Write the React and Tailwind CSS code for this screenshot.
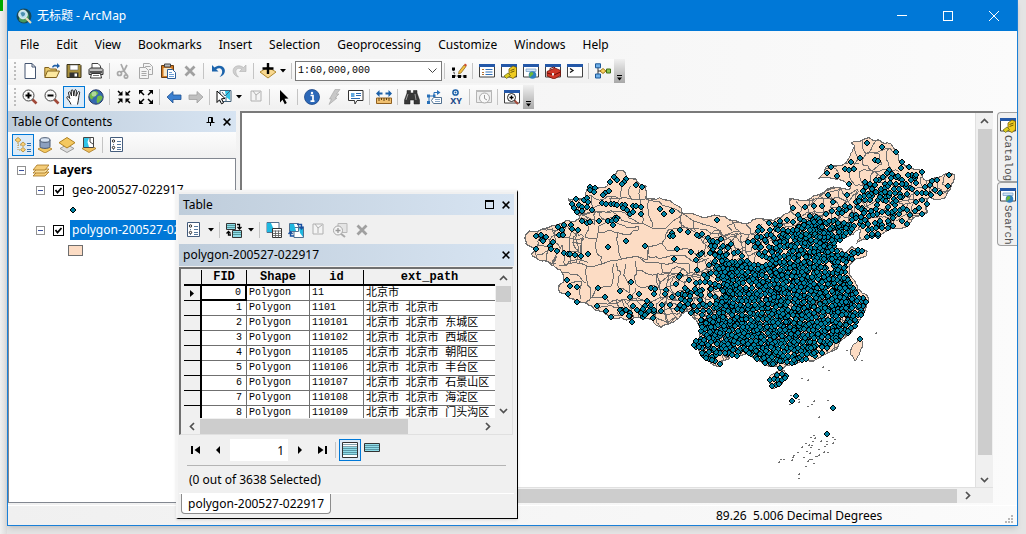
import React from "react";

/* ---------- map data ---------- */
function makeRandom(seed) {
  let s = seed;
  return () => {
    s = (s * 1664525 + 1013904223) % 4294967296;
    return s / 4294967296;
  };
}

const OUTLINE = [
  [526, 237], [530, 230], [540, 230], [549, 227], [558, 224], [573, 221], [581, 217], [577, 212], [572, 204], [570, 198],
  [580, 197], [588, 197], [589, 185], [598, 187], [608, 185], [612, 177], [618, 170], [626, 171], [628, 177], [637, 178],
  [647, 185], [647, 197], [653, 198], [667, 199], [682, 207], [684, 213], [697, 214], [720, 215], [738, 220], [752, 221],
  [760, 217], [783, 216], [792, 210], [791, 198], [798, 198], [807, 200], [813, 196], [823, 193], [827, 189], [840, 186],
  [851, 188], [852, 184], [845, 180], [837, 178], [820, 177], [827, 166], [837, 165], [846, 162], [852, 152], [856, 145],
  [852, 142], [863, 139], [880, 139], [892, 143], [898, 152], [903, 162], [910, 166], [922, 170], [927, 180], [938, 177],
  [947, 173], [956, 174], [952, 185], [947, 195], [942, 198], [930, 196], [928, 203], [928, 212], [920, 215], [910, 222],
  [893, 227], [880, 235], [867, 238], [858, 242], [862, 228], [857, 230], [850, 235], [843, 238], [835, 244], [843, 248],
  [846, 252], [853, 245], [868, 250], [867, 255], [857, 258], [850, 265], [850, 273], [857, 283], [863, 292], [870, 298],
  [867, 307], [863, 315], [858, 323], [850, 333], [840, 343], [827, 353], [810, 360], [795, 363], [787, 365], [783, 370],
  [778, 365], [765, 363], [757, 359], [748, 352], [740, 355], [732, 355], [723, 360], [722, 365], [713, 363], [707, 358],
  [702, 352], [693, 345], [700, 338], [702, 327], [698, 320], [692, 313], [687, 310], [680, 317], [670, 323], [663, 326],
  [655, 322], [653, 318], [643, 317], [628, 319], [612, 317], [600, 310], [587, 302], [577, 300], [567, 293], [560, 290],
  [560, 284], [565, 281], [562, 270], [555, 265], [543, 260], [532, 253], [537, 247], [527, 243],
];

const TAIWAN = [[862, 338], [864, 343], [861, 351], [858, 357], [856, 360], [851, 353], [853, 346]];
const HAINAN = [[769, 379], [776, 372], [785, 369], [788, 376], [782, 384], [775, 388]];

const DENSE = [
  [714, 266], [726, 260], [742, 257], [757, 264], [770, 260], [774, 246], [784, 230], [800, 222], [822, 219], [840, 220],
  [857, 222], [850, 235], [836, 243], [837, 249], [845, 254], [853, 247], [867, 251], [856, 257], [849, 265], [849, 275],
  [862, 293], [868, 299], [865, 310], [858, 323], [848, 334], [827, 351], [808, 359], [785, 364], [778, 364], [765, 362],
  [757, 358], [748, 351], [735, 353], [724, 354], [714, 362], [703, 354], [694, 345], [702, 336], [702, 318], [716, 312],
  [724, 290],
];
const NORTHEAST = [
  [866, 180], [888, 167], [900, 174], [914, 170], [922, 184], [938, 178], [930, 196], [912, 190], [900, 200], [902, 212],
  [916, 214], [893, 226], [880, 235], [862, 241], [866, 226], [846, 224], [856, 214], [856, 202], [864, 192],
];
const GANSU = [[706, 234], [718, 240], [732, 248], [742, 252], [752, 258], [742, 262], [722, 264], [712, 254]];
const SICHUAN = [[704, 266], [720, 260], [728, 290], [718, 312], [702, 316], [676, 310], [676, 294], [692, 286]];
const CORRIDOR = [[754, 246], [762, 228], [784, 220], [796, 216], [850, 208], [858, 216], [836, 222], [800, 226], [776, 242], [770, 262]];
const TIBET = [[618, 308], [640, 303], [652, 302], [662, 312], [654, 317], [622, 316]];

function inside([x, y], ring) {
  let hit = false;
  for (let i = 0, j = ring.length - 1; i < ring.length; j = i++) {
    const [xi, yi] = ring[i];
    const [xj, yj] = ring[j];
    if (yi > y !== yj > y && x < ((xj - xi) * (y - yi)) / (yj - yi) + xi) hit = !hit;
  }
  return hit;
}

function scatter(ring, step, jitter, keep, seed) {
  const rnd = makeRandom(seed);
  const out = [];
  let row = 0;
  for (let y = 160; y < 392; y += step * 0.9, row++) {
    for (let x = 600 + (row % 2) * (step / 2); x < 960; x += step) {
      const p = [Math.round(x + (rnd() - 0.5) * jitter), Math.round(y + (rnd() - 0.5) * jitter)];
      if (rnd() < keep && inside(p, ring)) out.push([p, rnd()]);
    }
  }
  return out.sort((a, b) => a[1] - b[1]).map((e) => e[0]);
}

const place = (ox, oy, list) => {
  const out = [];
  for (let i = 0; i < list.length; i += 2) out.push([Math.round(ox + list[i] / 3), Math.round(oy + list[i + 1] / 3)]);
  return out;
};

const WEST_STATIONS = place(520, 130, [
  285, 138, 293, 147, 273, 153, 321, 144, 315, 153, 308, 160, 351, 161, 369, 168, 212, 168, 228, 171, 213, 177, 225, 182,
  270, 181, 258, 187, 252, 192, 171, 203, 158, 218, 196, 206, 205, 202, 208, 212, 165, 230, 180, 222, 190, 228, 204, 228,
  174, 243, 189, 240, 219, 237, 250, 216, 262, 218, 276, 219, 284, 218, 294, 221, 309, 222, 318, 222, 312, 232, 324, 237,
  342, 226, 352, 226, 366, 228, 333, 249, 342, 244, 366, 249, 423, 234, 459, 240, 435, 249, 594, 267, 189, 270, 204, 276,
  213, 272, 240, 270, 267, 270, 279, 270, 288, 262, 295, 262, 291, 267, 282, 282, 117, 288, 135, 282, 129, 297, 156, 281,
  159, 294, 177, 297, 120, 312, 132, 312, 51, 315, 66, 312, 81, 318, 69, 327, 72, 330, 51, 354, 102, 333, 93, 345, 96, 354,
  114, 360, 135, 366, 147, 369, 153, 369, 168, 372, 186, 375, 207, 369, 267, 347, 321, 330, 378, 345, 483, 297, 507, 303,
  459, 306, 453, 315, 462, 316, 534, 312, 540, 316, 549, 309, 567, 321, 573, 330, 582, 330, 594, 333, 606, 324, 576, 345,
  588, 345, 612, 345, 627, 351, 636, 339, 474, 354, 516, 363, 465, 384, 531, 387, 540, 372, 549, 366, 573, 367, 588, 372,
  602, 363, 600, 378, 612, 375, 621, 372, 570, 402, 585, 396, 588, 390, 609, 390, 621, 400, 630, 400, 612, 412, 534, 417,
  576, 426, 564, 441, 600, 414, 612, 435, 639, 435, 483, 433, 480, 439, 510, 448, 471, 460, 498, 471, 531, 456, 144, 447,
  153, 465, 174, 468, 147, 489, 174, 513, 237, 471, 258, 498, 234, 525, 261, 540, 276, 559, 336, 453, 303, 480, 333, 498,
  360, 489, 396, 471, 408, 474, 405, 489, 441, 478, 438, 489, 459, 498, 477, 489, 486, 504, 498, 492, 513, 495, 534, 486,
  543, 480, 546, 493, 384, 510, 396, 522, 342, 525, 354, 537, 321, 537, 303, 536, 309, 546, 372, 534, 366, 546, 390, 540,
  405, 537, 378, 552, 402, 561, 330, 555, 339, 573, 429, 522, 426, 540, 453, 523, 474, 534, 483, 521, 507, 519, 525, 525,
  540, 525, 552, 519, 516, 546, 570, 540, 549, 552, 546, 567, 573, 456, 588, 459, 576, 474, 573, 492, 588, 498, 600, 465,
  612, 480, 624, 462, 621, 498, 573, 519, 591, 519, 600, 546, 612, 558, 621, 525,
]);
const EAST_STATIONS = place(680, 120, [
  564, 66, 609, 78, 651, 93, 543, 111, 516, 123, 588, 117, 597, 120, 669, 122, 666, 141, 690, 137, 729, 153, 711, 163,
  456, 138, 444, 156, 474, 165, 498, 144, 510, 147, 525, 144, 510, 189, 447, 222, 504, 222, 462, 243, 429, 255, 405, 255,
  378, 258, 342, 261, 357, 282, 459, 270, 480, 264, 498, 255, 513, 258, 489, 276, 531, 243, 543, 228, 552, 210, 540, 240,
  810, 162, 807, 195, 774, 177, 783, 215, 768, 207, 756, 222, 744, 250, 711, 243, 729, 237, 684, 267, 708, 270, 693, 282,
  729, 279, 684, 309, 672, 260, 720, 260, 27, 333, 54, 342, 69, 339, 303, 300, 270, 306, 240, 318, 237, 330, 234, 348, 208,
  363, 222, 360, 246, 378, 240, 399, 276, 342, 258, 357, 297, 326, 270, 378, 36, 393, 51, 417, 90, 432, 54, 447, 66, 398,
]);
const SOUTH_STATIONS = place(680, 310, [
  543, 84, 351, 255, 339, 270, 462, 291, 444, 369, 123, 159, 99, 147, 81, 141, 45, 102, 51, 90, 303, 171, 159, 132, 174, 135,
  234, 144, 258, 156, 282, 160, 36, 6, 294, 192, 309, 189, 321, 195, 273, 207, 285, 204, 297, 208, 309, 207, 291, 222, 279, 225,
  300, 219, 318, 201,
]);

const STATIONS = [
  ...scatter(TIBET, 6, 4, 0.8, 41),
  ...scatter(SICHUAN, 7, 6, 0.72, 23),
  ...scatter(CORRIDOR, 6, 4, 0.75, 31),
  ...scatter(GANSU, 6, 4, 0.8, 17),
  ...scatter(NORTHEAST, 5, 4, 0.88, 5),
  ...scatter(DENSE, 4, 3, 0.97, 11),
  ...WEST_STATIONS,
  ...EAST_STATIONS,
  ...SOUTH_STATIONS,
];

function jag(points, seed, closed) {
  const rnd = makeRandom(seed);
  let pts = closed ? [...points, points[0]] : points;
  for (let n = 0; n < 2; n++) {
    const next = [pts[0]];
    for (let i = 1; i < pts.length; i++) {
      const [ax, ay] = pts[i - 1];
      const [bx, by] = pts[i];
      const len = Math.hypot(bx - ax, by - ay);
      if (len > 3) next.push([(ax + bx) / 2 + (rnd() - 0.5) * len * 0.32, (ay + by) / 2 + (rnd() - 0.5) * len * 0.32]);
      next.push(pts[i]);
    }
    pts = next;
  }
  return "M" + pts.map((p) => p[0].toFixed(1) + " " + p[1].toFixed(1)).join("L") + (closed ? "Z" : "");
}

const line = (ox, oy, list, seed) => jag(place(ox, oy, list), seed, false);

const BORDERS = [
  line(520, 130, [270, 205, 380, 205, 420, 210, 490, 250], 1),
  line(520, 130, [185, 250, 240, 240, 300, 240, 330, 262, 400, 290, 440, 290, 485, 255], 2),
  line(520, 130, [305, 165, 310, 205], 3),
  line(520, 130, [335, 165, 328, 185, 340, 205], 4),
  line(520, 130, [365, 165, 360, 205], 5),
  line(520, 130, [390, 208, 388, 245, 400, 290], 6),
  line(520, 130, [365, 205, 372, 235, 370, 275], 7),
  line(520, 130, [240, 285, 300, 278, 358, 285, 358, 298, 300, 305, 238, 305, 240, 285], 8),
  line(520, 130, [230, 320, 235, 365, 250, 400, 310, 385, 300, 350, 297, 305], 9),
  line(520, 130, [310, 385, 385, 388, 390, 350, 378, 342, 430, 335, 450, 295, 490, 290], 10),
  line(520, 130, [490, 250, 485, 290, 540, 310, 600, 320, 660, 300], 11),
  line(520, 130, [495, 250, 525, 270, 530, 300], 12),
  line(520, 130, [525, 270, 590, 290, 610, 325], 13),
  line(520, 130, [660, 272, 625, 285, 640, 300], 14),
  line(520, 130, [120, 405, 160, 395, 205, 405, 250, 400], 15),
  line(520, 130, [205, 405, 203, 450, 215, 500, 200, 515], 16),
  line(520, 130, [285, 400, 285, 440, 275, 465, 235, 470, 215, 500], 17),
  line(520, 130, [290, 395, 305, 430, 300, 470, 330, 485, 320, 400], 18),
  line(520, 130, [350, 390, 355, 420, 345, 440, 370, 470, 420, 470, 415, 430, 355, 418], 19),
  line(520, 130, [310, 385, 420, 395, 510, 400, 510, 425, 430, 425, 425, 400], 20),
  line(520, 130, [420, 455, 490, 430, 540, 440, 560, 410, 580, 400], 21),
  line(520, 130, [390, 350, 385, 375, 430, 380, 520, 390, 570, 380], 22),
  line(520, 130, [430, 335, 450, 360, 500, 350, 550, 375], 23),
  line(520, 130, [160, 300, 150, 345, 155, 395], 24),
  line(520, 130, [195, 320, 190, 370, 180, 395], 25),
  line(520, 130, [172, 300, 178, 345, 170, 395], 26),
  line(520, 130, [210, 285, 200, 320, 235, 320, 238, 305], 27),
  line(520, 130, [100, 290, 120, 320, 190, 320], 28),
  line(520, 130, [90, 345, 80, 390, 110, 400], 29),
  line(520, 130, [120, 355, 100, 400], 30),
  line(520, 130, [160, 250, 215, 265, 300, 255, 370, 275], 31),
  line(520, 130, [125, 425, 170, 430, 200, 455], 32),
  line(520, 130, [155, 455, 190, 450, 180, 480, 185, 505], 33),
  line(520, 130, [215, 500, 260, 500, 290, 520, 360, 510, 420, 500, 470, 510, 540, 500], 34),
  line(520, 130, [350, 470, 340, 510], 35),
  line(520, 130, [400, 555, 430, 540, 480, 540, 520, 530], 36),
  line(520, 130, [450, 580, 445, 550], 37),
  line(520, 130, [440, 470, 445, 500, 430, 530], 38),
  line(520, 130, [495, 460, 510, 490, 500, 530, 505, 550], 39),
  line(520, 130, [530, 450, 550, 490, 545, 520], 40),
  line(680, 120, [0, 300, 45, 320, 100, 340, 160, 360, 185, 335, 160, 300], 41),
  line(680, 120, [165, 360, 170, 395, 215, 390, 250, 310], 42),
  line(680, 120, [200, 300, 215, 340, 230, 345], 43),
  line(680, 120, [250, 295, 290, 320, 340, 300, 370, 260, 440, 210, 510, 205], 44),
  line(680, 120, [335, 270, 370, 300, 420, 290, 460, 260, 510, 240, 540, 210], 45),
  line(680, 120, [350, 240, 370, 260], 46),
  line(680, 120, [405, 230, 410, 290], 47),
  line(680, 120, [435, 215, 470, 240, 480, 290], 48),
  line(680, 120, [525, 75, 540, 110, 510, 160, 530, 195, 560, 190], 49),
  line(680, 120, [550, 58, 560, 100, 550, 130, 580, 150, 630, 145, 660, 150], 50),
  line(680, 120, [590, 60, 570, 95, 630, 80, 650, 95], 51),
  line(680, 120, [630, 80, 620, 115, 635, 145], 52),
  line(680, 120, [560, 100, 600, 100, 610, 130, 580, 150], 53),
  line(680, 120, [440, 140, 470, 145, 480, 175], 54),
  line(680, 120, [497, 125, 540, 130, 550, 130], 55),
  line(680, 120, [740, 180, 760, 210, 790, 220, 815, 195], 56),
  line(680, 120, [800, 160, 790, 190, 815, 195], 57),
  line(680, 120, [660, 240, 700, 235, 740, 240], 58),
  line(680, 120, [650, 300, 690, 270, 745, 275], 59),
];

/* County lines: an irregular mesh drawn only where counties are small. */
function mesh(x0, y0, x1, y1, step, seed) {
  const rnd = makeRandom(seed);
  const grid = [];
  for (let y = y0; y <= y1; y += step) {
    const row = [];
    for (let x = x0; x <= x1; x += step) row.push([x + (rnd() - 0.5) * step, y + (rnd() - 0.5) * step]);
    grid.push(row);
  }
  const out = [];
  for (let r = 0; r < grid.length; r++)
    for (let c = 0; c < grid[r].length; c++) {
      if (c + 1 < grid[r].length && rnd() < 0.8) out.push(jag([grid[r][c], grid[r][c + 1]], seed + r * 31 + c, false));
      if (r + 1 < grid.length && rnd() < 0.8) out.push(jag([grid[r][c], grid[r + 1][c]], seed + r * 17 + c * 3, false));
    }
  return out.join("");
}

const COUNTIES = [
  mesh(540, 226, 590, 262, 9, 3),
  mesh(572, 196, 625, 222, 8, 4),
  mesh(600, 300, 660, 320, 8, 5),
  mesh(660, 270, 730, 330, 7, 6),
  mesh(700, 232, 780, 275, 7, 7),
  mesh(775, 215, 860, 245, 8, 8),
  mesh(800, 190, 860, 220, 10, 12),
  mesh(862, 175, 945, 240, 9, 9),
  mesh(695, 300, 870, 370, 7, 10),
].join("");

const ISLETS = place(680, 310, [
  588, 66, 502, 118, 546, 148, 429, 169, 447, 177, 366, 201, 384, 207, 333, 252, 357, 264, 356, 273, 330, 279, 444, 267,
  402, 270, 396, 279, 383, 285, 416, 318, 393, 378, 402, 372, 404, 380, 459, 378, 465, 384, 459, 396, 440, 390, 434, 405,
  422, 390, 417, 414, 396, 402, 387, 402, 393, 408, 380, 420, 366, 408, 354, 424, 342, 432, 336, 447, 312, 444, 303, 444,
  297, 453, 372, 438, 390, 444, 384, 450, 396, 444, 408, 436, 416, 432, 402, 456, 378, 465, 356, 490, 358, 502, 440, 400,
  432, 423, 398, 390, 378, 396, 338, 438, 412, 434, 444, 422, 390, 426,
]);

function MapDrawing() {
  return (
    <svg className="block h-[373px] w-[733px] shrink-0" viewBox="243 112 733 373" role="img" aria-label="Map of China">
      <defs>
        <clipPath id="land"><path d={jag(OUTLINE, 77, true)} /></clipPath>
      </defs>
      <path d={jag(OUTLINE, 77, true)} fill="#fcdcc4" stroke="#6e6e6e" strokeWidth="1.2" shapeRendering="crispEdges" />
      <g clipPath="url(#land)" fill="none" stroke="#6e6e6e" strokeWidth="1" shapeRendering="crispEdges">
        <path d={COUNTIES} />
        <path d={BORDERS.join("")} />
      </g>
      <path d={jag(TAIWAN, 8, true) + jag(HAINAN, 9, true)} fill="#fcdcc4" stroke="#6e6e6e" shapeRendering="crispEdges" />
      {ISLETS.map(([x, y], i) => (
        <path key={i} d={i % 3 ? `M${x} ${y}h2v1h-2z` : `M${x} ${y}h1v-1h1v2h-2z`} fill="#6e6e6e" />
      ))}
      {STATIONS.map(([x, y], i) => (
        <g key={i} shapeRendering="crispEdges">
          <path d={`M${x - 1} ${y - 3}h2v1h1v1h1v2h-1v1h-1v1h-2v-1h-1v-1h-1v-2h1v-1h1z`} fill="#000" />
          <path d={`M${x - 1} ${y - 2}h2v1h1v2h-1v1h-2v-1h-1v-2h1z`} fill="#0080a0" />
        </g>
      ))}
    </svg>
  );
}

/* ---------- icons, each on a 16 unit square ---------- */
const Pane = ({ children }) => (
  <>
    <path d="M.5 1.500h15v12.500H.5z" fill="#fff" stroke="#404040" />
    <path d="M0 1h16v3H0z" fill="#2458a8" />
    {children}
  </>
);
const Diamond = ({ y = 0, fill = "#f0c060", stroke = "#a87820" }) => (
  <path d={`M8 ${y}l7 4-7 4-7-4z`} fill={fill} stroke={stroke} strokeWidth=".8" />
);

const ICONS = {
  blank: <path d="M3 .5h7l3.500 3.500v11.500h-10.500zM10 .5V4h3.500" fill="#fff" stroke="#445570" />,
  open: <><path d="M.8 13.500V4.500h4l1.500 1.500h6v2" fill="#e8c868" stroke="#80601c" /><path d="M.8 14.500 3.500 8h12l-3 6.500z" fill="#fce8a0" stroke="#80601c" /><path d="M8 4c1-2.500 3-2.500 5-2V0l3 3-3 2.500V3.800c-2-.5-3-.3-4 1z" fill="#2060a8" /></>,
  save: <><path d="M1 1.500h13l1 1v12H1z" fill="#a8903c" stroke="#383018" /><path d="M4 2h8v5H4z" fill="#fff" stroke="#666" strokeWidth=".6" /><path d="M3.500 9.500h9v5h-9z" fill="#333" /><path d="M8.500 10.500h2.500v3H8.500z" fill="#fff" /></>,
  print: <><path d="M4 6V.5h6L12.500 3v3" fill="#fff" stroke="#444" /><path d="M1 6.500 2.500 5h11L15 6.500v5H1z" fill="#bbb" stroke="#333" /><path d="M2 8h12v2H2z" fill="#555" /><path d="M3.500 10.500h9l1 4.500h-11z" fill="#fff" stroke="#333" /><path d="M5 12.500h6" stroke="#777" /></>,
  cut: <g fill="none" stroke="#a8a8a8" strokeWidth="1.700"><path d="M5 1l3 7 3 4M11 2 8 8l-4 1" /><circle cx="3.500" cy="10.500" r="2" /><circle cx="10" cy="13.500" r="1.700" /></g>,
  copy: <g fill="#f4f4f4" stroke="#a8a8a8"><path d="M5.500.5h6l3 3v8h-9z" /><path d="M1.500 4.500h6l3 3v8h-9z" /><path d="M3.500 8.500h5M3.500 10.500h5M3.500 12.500h5M7.500 4.500v-1h5M11 6.500h2" /></g>,
  paste: <><path d="M1.500 2.500h12v12h-12z" fill="#d07820" stroke="#683c10" /><path d="M4.500 1h6v3h-6z" fill="#bbb" stroke="#444" /><path d="M3.500 5h8v8h-8z" fill="#f8e8c8" /><path d="M7.500 6.500h5l3 3v6h-8z" fill="#fff" stroke="#2c5c98" /><path d="M9 9.500h3M9 11.500h5M9 13.500h5" stroke="#6ea0d8" /></>,
  del: <path d="M3.500 3.500l9 9M12.500 3.500l-9 9" stroke="#a0a0a0" strokeWidth="2.800" />,
  undo: <path d="M2 2v6.500h6.500L6.200 6.300C9.500 4 13 6 12 10c-.3 1.400-1.500 3-2.500 4 4-1 6-4.500 5.200-7.500C13.800 2.700 8.500 1.500 4.500 4.500z" fill="#1c64ac" />,
  redo: <path d="M14 2v6.500H7.500l2.300-2.200C6.500 4 3 6 4 10c.3 1.400 1.500 3 2.500 4-4-1-6-4.500-5.200-7.500C2.200 2.700 7.500 1.500 11.500 4.500z" fill="#d0d0d0" stroke="#b0b0b0" strokeWidth=".6" />,
  add: <><path d="M8 4l8 5-8 6-8-6z" fill="#f8d890" stroke="#b08830" /><path d="M8 0v11M2.500 5.500h11" stroke="#000" strokeWidth="2.400" /></>,
  edit: <><path d="M2 6l2 7h9" fill="none" stroke="#222" strokeDasharray="2 1" /><path d="M1 4.500h3v3H1zM1 12h3v3H1zM7 12h3v3H7zM12.500 12h3v3h-3z" fill="#000" /><path d="M8 8.500 13 2l2 1.500L10 10l-2.500 1z" fill="#f4c040" stroke="#806018" strokeWidth=".7" /><path d="M13 2l1-1.500L16 2l-1 1.500z" fill="#d04828" /></>,
  toc: <Pane><path d="M3 6.500h2M3 9.500h2M3 11.500h2" stroke="#b07030" /><path d="M6.500 6.500h7M6.500 9h7M6.500 11.500h7" stroke="#3070b8" /></Pane>,
  catalog: <Pane><path d="M8 6l4-3 3.500 1.500v8l-3.500 3-4-2z" fill="#f0cc20" stroke="#705c08" strokeWidth=".8" /><path d="M9.500 7.500l4-1.500M9.500 9.500l4-1.500" stroke="#705c08" /><path d="M3 13l4-3 2.500 2.500-4 3z" fill="#dccc20" stroke="#505008" strokeWidth=".6" /></Pane>,
  search: <Pane><path d="M3 6h10v2.500H3z" fill="#cfe4f8" stroke="#7098c0" strokeWidth=".7" /><circle cx="9.500" cy="12" r="3.800" fill="#3080c0" /><path d="M8 9c2 0 3 1 2 2.500s-2 1-3 3c-1-1.500-1-4 1-5.500z" fill="#6cb838" /></Pane>,
  toolbox: <Pane><path d="M2 8.500 10 5l5.500 2.500v5L9 16l-7-3z" fill="#d03828" stroke="#701008" strokeWidth=".8" /><path d="M2 10l7 2 6.500-3M5 7V5.500l4-1.500 1 1" fill="none" stroke="#701008" /><path d="M7 10h2v2.500H7z" fill="#e8e8e8" /></Pane>,
  python: <Pane><path d="M3 5.500l3 2-3 2" fill="none" stroke="#111" strokeWidth="1.300" /></Pane>,
  model: <><path d="M3 3v10M3 8h8" stroke="#333" fill="none" /><path d="M.5.800h5v4h-5zM.5 11h5v4h-5z" fill="#70b0e8" stroke="#1c5898" /><path d="M5 8l3-2.500L11 8l-3 2.500z" fill="#f8d060" stroke="#a07818" /><path d="M11.500 6h4v4h-4z" fill="#90c850" stroke="#406c18" /></>,
  zoomIn: <><path d="M10 10l4.500 4.500" stroke="#a04838" strokeWidth="2.600" /><circle cx="6.500" cy="6.500" r="5.500" fill="#f8f8f8" stroke="#444" /><path d="M6.500 3.500v6M3.500 6.500h6" stroke="#000" strokeWidth="2" /></>,
  zoomOut: <><path d="M10 10l4.500 4.500" stroke="#a04838" strokeWidth="2.600" /><circle cx="6.500" cy="6.500" r="5.500" fill="#f8f8f8" stroke="#444" /><path d="M3.500 6.500h6" stroke="#000" strokeWidth="2" /></>,
  pan: <path d="M5 15.500C4 12 1 10 .8 8.500c0-1.400 1.800-1 3 1L2.500 4c-.2-1.500 1.500-1.700 2-.2L5.500 7 5.200 2c0-1.600 1.800-1.600 2 0L7.800 7l.7-5.300c.3-1.500 2-1.200 1.900.3L10 7.200l1.900-4c.7-1.300 2.100-.6 1.700.7-1 3.500-.8 6-2.100 11.600" fill="#fff" stroke="#222" />,
  globe: <><circle cx="8" cy="8" r="7.200" fill="#3468b0" stroke="#283c68" /><path d="M4 3c3-2 5-1 6 .5s-1 2-2.500 3.500-3 1-3 3.500c-1 .5-2.500-1-3-3S3 4 4 3zM10 7c2-1 4-.5 4.500 1S12 13 10 14 8.500 8 10 7z" fill="#70b848" /><circle cx="6" cy="5" r="2.500" fill="#fff" opacity=".45" /></>,
  shrink: <g stroke="#000" strokeWidth="1.500" fill="#000"><path d="M2 2l3 3M14 2l-3 3M2 14l3-3M14 14l-3-3" /><path d="M6.500 2v4.500H2zM9.500 2v4.500H14zM6.500 14V9.500H2zM9.500 14V9.500H14z" stroke="none" /></g>,
  grow: <g stroke="#000" strokeWidth="1.500" fill="#000"><path d="M3 3l3 3M13 3l-3 3M3 13l3-3M13 13l-3-3" /><path d="M1 1h4.500L1 5.500zM15 1h-4.500L15 5.500zM1 15h4.500L1 10.500zM15 15h-4.500l4.500-4.500z" stroke="none" /></g>,
  back: <path d="M1 8l6-5.500V6h8v4.500H7V14z" fill="#3c80d0" stroke="#205090" strokeWidth=".8" />,
  forward: <path d="M15 8 9 2.500V6H1v4.500h8V14z" fill="#c0c0c0" stroke="#a0a0a0" strokeWidth=".8" />,
  select: <><path d="M4 1.500h11v11H4z" fill="#fff" stroke="#406078" /><path d="M9 2h5v9l-4-3z" fill="#30c4e8" /><path d="M6 3l3 4 5-5M10 8v4" stroke="#406078" fill="none" /><path d="M1 2l8 7.500-3.500.300 2 4-2 1-2-4L1 13.500z" fill="#fff" stroke="#000" /></>,
  clear: <g transform="translate(0 -1)"><path d="M3 3h10v10H3z" fill="#f4f4f4" stroke="#b0b0b0" /><path d="M5 3l3 4 4-3M8 7v5" fill="none" stroke="#b0b0b0" /></g>,
  pointer: <path d="M4 1l8.500 8.500-4 .2 2.300 4.300-2 1.200-2.300-4.500L4 13.500z" fill="#000" />,
  info: <><circle cx="8" cy="8" r="7.500" fill="#2c68b8" stroke="#1c4888" strokeWidth=".8" /><path d="M6.500 6.500h2.500V12M6.500 12.200h4" stroke="#fff" strokeWidth="1.700" fill="none" /><circle cx="8" cy="4" r="1.200" fill="#fff" /></>,
  bolt: <path d="M9 .5h5L10.500 5H13l-4 4h2L3 15.500 5.500 10h-2z" fill="#c8c8c8" stroke="#aaa" strokeWidth=".7" />,
  popup: <><path d="M.5 1.500h14.500v10H9L7 15l-.5-3.500h-6z" fill="#fff" stroke="#333" /><path d="M3 4h3.500v4H3z" fill="#60a8e0" /><path d="M8 4.500h5M8 6.500h5M3 9.500h9" stroke="#2868b0" /></>,
  measure: <><path d="M.5 9h15v5.500H.5z" fill="#f0c070" stroke="#906020" /><path d="M3 9v3M5.500 9v2M8 9v3M10.500 9v2M13 9v3" stroke="#604010" /><path d="M0 4.500 3.500 1v2.500h3v2h-3V8zM16 4.500 12.500 1v2.500h-3v2h3V8z" fill="#1c60a8" /></>,
  find: <><path d="M3 1.500h3.500V4h3V1.500H13V4l2.500 7v4H10v-4H6v4H.5v-4L3 4z" fill="#383838" stroke="#181818" strokeWidth=".5" /><path d="M4 5l-2 6M11 5l1 6" stroke="#999" /></>,
  route: <><path d="M3 13V7h5V3.500h4" fill="none" stroke="#2870b8" /><path d="M1 5.500h3v3H1zM1 12h3v3H1zM7 5.500h2.500V8H7zM11 1l3.500 2.500L11 6z" fill="#2870b8" /><path d="M7.500 8.500h8v6h-8l-2-3z" fill="#fff" stroke="#507090" /><path d="M9 10.500h5M9 12.500h5" stroke="#88a8c8" /></>,
  time: <><path d="M.5 1.500h15v12h-15z" fill="#eee" stroke="#b4b4b4" /><path d="M0 1h16v2H0z" fill="#bbb" /><circle cx="8.500" cy="9" r="5" fill="#f8f8f8" stroke="#aaa" /><path d="M8.500 6v3.500l2.500 1.500" fill="none" stroke="#999" /></>,
  viewer: <Pane><path d="M10 11l4 4" stroke="#a04838" strokeWidth="2" /><circle cx="7.500" cy="8.500" r="4" fill="#fff" stroke="#222" /><path d="M7.500 6.500v4M5.500 8.500h4" stroke="#000" strokeWidth="1.400" /></Pane>,
  drawOrder: <><path d="M3 4v9h4M3 8h4" fill="none" stroke="#b89040" strokeDasharray="1 1" /><path d="M3 .5 6 3 3 5.500 0 3zM8 5l2.500 2.200L8 9.500 5.500 7.200zM8 10.500l2.500 2.200L8 15l-2.500-2.300z" fill="#f8d078" stroke="#b08830" strokeWidth=".8" /><path d="M12 6.500h4M12 8.500h4M12 12.500h4M12 14.500h4" stroke="#3070b0" /></>,
  source: <><Diamond y={8} fill="#f4c860" /><path d="M3 3v6.500c0 2.500 10 2.500 10 0V3" fill="#8ca0c0" stroke="#485870" /><ellipse cx="8" cy="3" rx="5" ry="2.300" fill="#d8e4f4" stroke="#485870" /></>,
  visible: <><Diamond y={7.500} fill="#ddd" stroke="#888" /><path d="M8 .5l8 5.200-8 5.300-8-5.300z" fill="#f4c860" stroke="#b08020" /></>,
  selLayer: <><Diamond y={7.500} /><path d="M2.500.5h10v10h-10z" fill="#fff" stroke="#444" /><path d="M3 1h5L6.500 5 8 10H3z" fill="#30c4e8" /><path d="M9 1v4l3 2" stroke="#444" fill="none" /></>,
  options: <><path d="M1.500.5h12v14h-12z" fill="#fff" stroke="#445c7c" /><circle cx="4.500" cy="4" r="1.200" fill="#fff" stroke="#000" strokeWidth=".8" /><circle cx="4.500" cy="10.500" r="1.200" fill="#fff" stroke="#000" strokeWidth=".8" /><path d="M8 4.500h4M4 7.500h1M8 7.500h4M8 10.500h4M4 12.500h1M8 12.500h4" stroke="#56789c" /></>,
  layers: <g stroke="#a47420" strokeWidth=".8"><path d="M0 14l4-4h12l-4 4z" fill="#f4cc78" /><path d="M0 11l4-4h12l-4 4z" fill="#f8dc98" /><path d="M0 8l4-5h12l-4 5z" fill="#f4cc78" /></g>,
  related: <><path d="M.5 1.500h9v6h-9zM6.500 8.500h9v7h-9z" fill="#90dce8" stroke="#333" /><path d="M1 3.500h8M1 5.500h8M7 10.500h8M7 12.500h8" stroke="#488" strokeWidth=".8" /><path d="M11 2.500h2.500V7M11.500 5l2 2 2-2M5 13H2.500V9.500M.5 11.500l2-2 2 2" fill="none" stroke="#000" strokeWidth="1.300" /></>,
  attrs: <><path d="M1 .5h12v10H1z" fill="#fff" stroke="#507090" /><path d="M1 1h4l4 9H1z" fill="#20b8e0" /><path d="M6.500 6.500h9v9h-9z" fill="#fff" stroke="#333" /><path d="M6.500 9h9M6.500 11.500h9M6.500 13.500h9M9.500 8.500v7M12.500 8.500v7" stroke="#555" strokeWidth=".8" /></>,
  swap: <><path d="M1.500 1.500h9v8h-9zM6 5.500h9.500v10H6z" fill="#fff" stroke="#507090" /><path d="M2 2h4l2 7H2zM11 6h4v9l-3-4z" fill="#20b8e0" /><path d="M9 2.500h4.500V6M11.500 4.500l2 2.500L15.500 4.500M6 14H2.500v-4M.5 12l2-2.500L4.500 12" fill="none" stroke="#1850a0" strokeWidth="1.400" /></>,
  zoomSel: <><path d="M6 1.500h9v9H6z" fill="#e4e4e4" stroke="#b8b8b8" /><path d="M8 11l5 4" stroke="#aaa" strokeWidth="2" /><circle cx="6" cy="8.500" r="4.500" fill="#f4f4f4" stroke="#a8a8a8" /><path d="M6 6v5M3.500 8.500h5" stroke="#999" strokeWidth="1.300" /></>,
};

const Icon = ({ name, className = "size-4" }) => (
  <svg className={`${className} shrink-0`} viewBox="0 0 16 16" aria-hidden="true">{ICONS[name]}</svg>
);

const GotoXY = () => (
  <span className="flex flex-col items-center">
    <svg className="size-[7px]" viewBox="0 0 7 7" aria-hidden="true"><circle cx="3.500" cy="3.500" r="2.600" fill="#fff" stroke="#1c60a8" strokeWidth="1.500" /><circle cx="3.500" cy="3.500" r="1" fill="#1c60a8" /></svg>
    <span className="text-[9px] leading-[9px] font-bold text-[#1c4888]">XY</span>
  </span>
);

const Tool = ({ name, label, active, children }) => (
  <button
    type="button"
    aria-label={label}
    className={`flex h-[22px] w-[22px] shrink-0 items-center justify-center ${active ? "border border-[#0078d7] bg-[#dcebf8]" : ""}`}
  >
    {children || <Icon name={name} />}
  </button>
);
const Sep = () => <span className="mr-[3px] ml-0.5 h-4 w-px shrink-0 bg-[#c4c4c4]" />;
const Grip = () => (
  <span className="mr-[3px] ml-1.5 flex flex-col gap-0.5">
    {[0, 1, 2, 3, 4].map((i) => <i key={i} className="size-0.5 bg-[#bdbdbd]" />)}
  </span>
);
const Caret = () => (
  <svg className="mr-0.5 h-1 w-2 shrink-0" viewBox="0 0 8 4" aria-hidden="true"><path d="M1 0h6L4 3.500z" fill="#000" /></svg>
);
const Overflow = () => (
  <button type="button" aria-label="More tools" className="flex h-6 w-[11px] items-end justify-center bg-linear-to-b from-[#f0f0f0] to-[#a8a8a8] pb-0.5">
    <svg className="h-1.5 w-[7px]" viewBox="0 0 7 6" aria-hidden="true"><path d="M1 0h5v1H1zM1 2.500h5L3.500 5.500z" fill="#000" /></svg>
  </button>
);

const ARROWS = { up: "M1 6l3.500-3.500L8 6", down: "M1 3l3.500 3.500L8 3", left: "M6 1 2.500 4.500 6 8", right: "M3 1l3.500 3.500L3 8" };
const Arrow = ({ dir, label }) => (
  <button type="button" aria-label={label} className="flex size-4 shrink-0 items-center justify-center">
    <svg className="size-[9px]" viewBox="0 0 9 9" aria-hidden="true"><path d={ARROWS[dir]} fill="none" stroke="#505050" strokeWidth="1.700" /></svg>
  </button>
);
const Cross = ({ className = "size-[9px]" }) => (
  <svg className={className} viewBox="0 0 9 9" aria-hidden="true"><path d="M.7.7l7.600 7.600M8.300.7.7 8.300" stroke="currentColor" strokeWidth="1.600" /></svg>
);

/* ---------- bars ---------- */
function TitleBar() {
  return (
    <header className="flex h-[31px] shrink-0 items-center bg-[#0078d7] pl-2 text-white">
      <svg className="size-4" viewBox="0 0 16 16" aria-hidden="true">
        <circle cx="8" cy="8" r="7.500" fill="#184858" /><path d="M3 3c3-2 6-1 8 1s3 6 0 9-7 1-8-1z" fill="#48985c" />
        <path d="M10 10l5 5" stroke="#e8dcb8" strokeWidth="2.200" /><circle cx="7" cy="6.500" r="4.300" fill="#c0e0f0" stroke="#e8f4f8" /><path d="M4.500 5c2-2 4-1 4.500.500s-1 3-3 3z" fill="#4c90b0" />
      </svg>
      <h1 className="ml-[5px] text-xs">无标题 - ArcMap</h1>
      <div className="ml-auto flex">
        <button type="button" aria-label="Minimize" className="flex h-[31px] w-[46px] items-center justify-center"><span className="h-px w-2.5 bg-white" /></button>
        <button type="button" aria-label="Maximize" className="flex h-[31px] w-[46px] items-center justify-center"><span className="size-2.5 border border-white" /></button>
        <button type="button" aria-label="Close" className="flex h-[31px] w-[46px] items-center justify-center">
          <svg className="size-2.5" viewBox="0 0 10 10" aria-hidden="true"><path d="M0 0l10 10M10 0 0 10" stroke="#fff" /></svg>
        </button>
      </div>
    </header>
  );
}

const MENUS = ["File", "Edit", "View", "Bookmarks", "Insert", "Selection", "Geoprocessing", "Customize", "Windows", "Help"];

function StandardBar() {
  return (
    <div className="flex h-[25px] items-center">
      <div className="flex h-6 items-center bg-linear-to-b from-[#fcfcfc] to-[#f0f0f0]">
        <Grip />
        <Tool name="blank" label="New" /><Tool name="open" label="Open" /><Tool name="save" label="Save" /><Tool name="print" label="Print" />
        <Sep />
        <Tool name="cut" label="Cut" /><Tool name="copy" label="Copy" /><Tool name="paste" label="Paste" /><Tool name="del" label="Delete" />
        <Sep />
        <Tool name="undo" label="Undo" /><Tool name="redo" label="Redo" />
        <Sep />
        <Tool name="add" label="Add data" />
        <Caret />
        <Sep />
        <span className="grid h-5 w-[147px] items-center border border-[#7a7a7a] bg-white">
          <select aria-label="Map scale" className="w-full appearance-none pl-0.5 font-['Liberation_Mono','Noto_Sans_CJK_SC',monospace] text-[10px] [grid-area:1/1]">
            <option>1:60,000,000</option>
          </select>
          <svg className="pointer-events-none mr-1 h-[5px] w-[9px] justify-self-end [grid-area:1/1]" viewBox="0 0 9 5" aria-hidden="true"><path d="M.5.5l4 4 4-4" fill="none" stroke="#444" /></svg>
        </span>
        <Sep />
        <Tool name="edit" label="Editor" />
        <Sep />
        <Tool name="toc" label="Table of contents" /><Tool name="catalog" label="Catalog window" /><Tool name="search" label="Search window" />
        <Tool name="toolbox" label="Toolbox" /><Tool name="python" label="Python" />
        <Sep />
        <Tool name="model" label="Model builder" />
      </div>
      <Overflow />
    </div>
  );
}

function ToolsBar() {
  return (
    <div className="flex h-[27px] items-center">
      <div className="flex h-6 items-center bg-linear-to-b from-[#fcfcfc] to-[#f0f0f0]">
        <Grip />
        <Tool name="zoomIn" label="Zoom in" /><Tool name="zoomOut" label="Zoom out" /><Tool name="pan" label="Pan" active /><Tool name="globe" label="Full extent" />
        <Sep />
        <Tool name="shrink" label="Fixed zoom in" /><Tool name="grow" label="Fixed zoom out" />
        <Sep />
        <Tool name="back" label="Previous extent" /><Tool name="forward" label="Next extent" />
        <Sep />
        <Tool name="select" label="Select features" />
        <Caret />
        <Tool name="clear" label="Clear selection" />
        <Sep />
        <Tool name="pointer" label="Select elements" />
        <Sep />
        <Tool name="info" label="Identify" /><Tool name="bolt" label="Hyperlink" /><Tool name="popup" label="HTML popup" />
        <Sep />
        <Tool name="measure" label="Measure" />
        <Sep />
        <Tool name="find" label="Find" /><Tool name="route" label="Find route" /><Tool label="Go to XY"><GotoXY /></Tool>
        <Sep />
        <Tool name="time" label="Time slider" />
        <Sep />
        <Tool name="viewer" label="Viewer window" />
      </div>
      <Overflow />
    </div>
  );
}

/* ---------- contents panel ---------- */
const Minus = () => (
  <button type="button" aria-label="Collapse" className="flex size-[9px] shrink-0 items-center justify-center border border-[#919191] bg-white">
    <span className="h-px w-[5px] bg-[#3a4f9c]" />
  </button>
);

const LayerCheck = ({ id }) => (
  <span className="ml-2 grid size-[11px] shrink-0">
    <input id={id} type="checkbox" defaultChecked className="peer size-[11px] appearance-none border border-black bg-white [grid-area:1/1]" />
    <svg className="pointer-events-none hidden size-[11px] peer-checked:block [grid-area:1/1]" viewBox="0 0 11 11" aria-hidden="true"><path d="M2.500 5l2 2.500 4-4.500" fill="none" stroke="#000" strokeWidth="1.800" /></svg>
  </span>
);

function Contents() {
  return (
    <aside className="flex w-[228px] shrink-0 flex-col">
      <div className="flex h-[21px] shrink-0 items-center bg-linear-to-r from-[#bfcddb] to-[#d7e4f2] pr-[5px] pl-1">
        <h2>Table Of Contents</h2>
        <button type="button" aria-label="Auto hide" className="ml-auto">
          <svg className="size-[9px]" viewBox="0 0 9 9" aria-hidden="true"><path d="M2.500 5V.5h4V5M5.500.5V5M.5 5.500h8M4.500 5.500V9" fill="none" stroke="#000" /></svg>
        </button>
        <button type="button" aria-label="Close contents" className="ml-2"><Cross className="size-2" /></button>
      </div>
      <div className="flex h-[26px] shrink-0 items-center bg-linear-to-b from-[#fcfcfc] to-[#f0f0f0] pl-1">
        <Tool name="drawOrder" label="List by drawing order" active /><Tool name="source" label="List by source" />
        <Tool name="visible" label="List by visibility" /><Tool name="selLayer" label="List by selection" />
        <Sep />
        <Tool name="options" label="Options" />
      </div>
      <ul className="min-h-0 flex-1 border border-[#828790] bg-white pt-px">
        <li className="flex h-5 items-center pl-2"><Minus /><Icon name="layers" className="ml-[7px] size-4" /><span className="ml-1 font-bold">Layers</span></li>
        <li className="flex h-5 items-center pl-[27px]"><Minus /><LayerCheck id="layer-geo" /><label htmlFor="layer-geo" className="ml-1.5 px-0.5 whitespace-nowrap">geo-200527-022917</label></li>
        <li className="flex h-5 items-center pl-[61px]">
          <svg className="size-1.5" viewBox="-3 -3 6 6" aria-hidden="true"><path d="M-1-3h2v1h1v1h1v2h-1v1h-1v1h-2v-1h-1v-1h-1v-2h1v-1h1z" /><path d="M-1-2h2v1h1v2h-1v1h-2v-1h-1v-2h1z" fill="#0080a0" /></svg>
        </li>
        <li className="flex h-5 items-center pl-[27px]"><Minus /><LayerCheck id="layer-polygon" /><label htmlFor="layer-polygon" className="ml-1.5 bg-[#0078d7] px-0.5 leading-5 whitespace-nowrap text-white">polygon-200527-022917</label></li>
        <li className="flex h-5 items-center pl-[59px]"><span className="h-[11px] w-[15px] border border-[#6e6e6e] bg-[#fcdcc4]" /></li>
      </ul>
    </aside>
  );
}

/* ---------- attribute table window ---------- */
const ROWS = [
  ["0", "11", "北京市"],
  ["1", "1101", "北京市 北京市"],
  ["2", "110101", "北京市 北京市 东城区"],
  ["3", "110102", "北京市 北京市 西城区"],
  ["4", "110105", "北京市 北京市 朝阳区"],
  ["5", "110106", "北京市 北京市 丰台区"],
  ["6", "110107", "北京市 北京市 石景山区"],
  ["7", "110108", "北京市 北京市 海淀区"],
  ["8", "110109", "北京市 北京市 门头沟区"],
];

const Step = ({ label, d }) => (
  <button type="button" aria-label={label} className="flex w-[22px] justify-center"><svg className="h-2 w-2.5" viewBox="0 0 10 8" aria-hidden="true"><path d={d} fill="#000" /></svg></button>
);

function TableWindow() {
  return (
    <section className="absolute top-[190px] left-[176px] z-10 flex w-[342px] flex-col border-t-2 border-r border-b border-l-2 border-t-[#f4f4f4] border-r-black border-b-black border-l-[#f4f4f4] bg-[#f0f0f0] pt-0.5 pr-[3px] pl-px shadow-sm">
      <div className="flex h-[21px] items-center bg-linear-to-r from-[#bfcddb] to-[#d7e4f2] px-1">
        <h2>Table</h2>
        <button type="button" aria-label="Maximize table" className="ml-auto flex"><span className="size-[9px] border border-t-2 border-black" /></button>
        <button type="button" aria-label="Close table" className="ml-2"><Cross className="size-2" /></button>
      </div>
      <div className="mt-px ml-1 flex h-7 items-center">
        <Tool name="options" label="Table options" /><span className="w-0.5" /><Caret /><Sep />
        <Tool name="related" label="Related tables" /><span className="w-0.5" /><Caret /><Sep />
        <Tool name="attrs" label="Select by attributes" /><Tool name="swap" label="Switch selection" />
        <Tool name="clear" label="Clear selected" /><Tool name="zoomSel" label="Zoom to selected" /><Tool name="del" label="Delete selected" />
      </div>
      <div className="flex h-[22px] items-center bg-linear-to-r from-[#bfcddb] to-[#d7e4f2] px-1">
        <h3>polygon-200527-022917</h3>
        <button type="button" aria-label="Close tab" className="ml-auto"><Cross className="size-2" /></button>
      </div>
      <div className="mt-px mr-px flex flex-col border border-t-2 border-l-2 border-[#e0e0e0] border-t-[#707070] border-l-[#707070] pt-px pl-[3px]">
        <div className="flex h-[148px]">
          <div className="min-w-0 flex-1 overflow-hidden bg-white font-['Liberation_Mono','Noto_Sans_CJK_SC',monospace]">
            <table className="w-full table-fixed border-separate border-spacing-0 text-[10px] leading-[14px]">
              <colgroup><col className="w-[18px]" /><col className="w-[45px]" /><col className="w-[63px]" /><col className="w-[54px]" /><col /></colgroup>
              <thead className="bg-[#f0f0f0] text-xs leading-[14px]">
                <tr>
                  {["", "FID", "Shape", "id", "ext_path"].map((h) => (
                    <th key={h} scope="col" className={`h-4 border-b-2 border-black p-0 font-bold ${h === "ext_path" ? "" : "border-r"}`}>{h}</th>
                  ))}
                </tr>
              </thead>
              <tbody>
                {ROWS.map(([fid, id, path], i) => (
                  <tr key={fid} className="h-[15px]">
                    <th aria-label={`Row ${fid}`} className="border-r-2 border-b border-black bg-[#f0f0f0] p-0">
                      {i === 0 && <svg className="mx-auto h-[7px] w-1" viewBox="0 0 4 7" aria-hidden="true"><path d="M0 0l4 3.500L0 7z" /></svg>}
                    </th>
                    <td className={`p-0 pr-1 text-right ${i === 0 ? "border-r-2 border-b-2 border-black leading-[13px]" : "border-r border-b border-[#707070]"}`}>{fid}</td>
                    <td className="border-r border-b border-[#707070] p-0 pl-0.5">Polygon</td>
                    <td className="border-r border-b border-[#707070] p-0 pl-0.5">{id}</td>
                    <td className="border-b border-[#707070] p-0 pl-0.5 text-[11px] leading-[14px] whitespace-nowrap">{path}</td>
                  </tr>
                ))}
              </tbody>
            </table>
          </div>
          <div className="flex w-[17px] flex-col items-center">
            <Arrow dir="up" label="Scroll rows up" />
            <span className="h-4 w-[15px] bg-[#cdcdcd]" />
            <span className="flex-1" />
            <Arrow dir="down" label="Scroll rows down" />
          </div>
        </div>
        <div className="flex h-4 items-center">
          <Arrow dir="left" label="Scroll columns left" />
          <span className="h-[15px] w-[208px] bg-[#cdcdcd]" />
          <span className="flex-1" />
          <span className="mr-[17px]"><Arrow dir="right" label="Scroll columns right" /></span>
        </div>
      </div>
      <div className="ml-1.5 flex h-[30px] items-center">
        <Step label="First record" d="M0 0h2v8H0zM9 0v8L3.500 4z" />
        <Step label="Previous record" d="M7 0v8L3 4z" />
        <input aria-label="Record number" defaultValue="1" className="mx-px h-[22px] w-[58px] bg-white pr-1 text-right" />
        <Step label="Next record" d="M3 0v8l4-4z" />
        <Step label="Last record" d="M1 0v8l5.500-4zM8 0h2v8H8z" />
        <Sep />
        <Tool label="Show all records" active>
          <svg className="size-4" viewBox="0 0 16 16" aria-hidden="true"><path d="M.5.500h15v15H.5z" fill="#fff" stroke="#333" /><path d="M1 5h14v8H1z" fill="#90dce8" /><path d="M1 2.500h14M1 4.500h14M1 6.500h14M1 8.500h14M1 10.500h14M1 12.500h14" stroke="#367" strokeWidth=".6" /></svg>
        </Tool>
        <Tool label="Show selected records">
          <svg className="size-4" viewBox="0 0 16 16" aria-hidden="true"><path d="M.5 1.500h15v8H.5z" fill="#90dce8" stroke="#333" /><path d="M1 3.500h14M1 5.500h14M1 7.500h14" stroke="#367" strokeWidth=".6" /></svg>
        </Tool>
      </div>
      <div className="mx-2 border-t border-[#b4b4b4]" />
      <p className="flex h-7 items-center border-b border-white pl-2.5">(0 out of 3638 Selected)</p>
      <div className="mb-1 ml-0.5 flex">
        <button type="button" className="h-5 rounded-b-sm border border-t-0 border-[#8c8c8c] bg-white px-1.5">polygon-200527-022917</button>
      </div>
    </section>
  );
}

const DockTab = ({ name, children }) => (
  <button type="button" className="flex flex-col items-center gap-0.5 rounded-l-sm border border-r-0 border-[#a0a0a0] bg-[#f0f0f0] pt-1">
    <Icon name={name} />
    <span className="font-['Liberation_Mono',monospace] text-[11px] leading-4 text-[#505050] [writing-mode:vertical-rl]">{children}</span>
  </button>
);

export default function App() {
  return (
    <div className="flex h-screen bg-[#e4e4e4] font-['Noto_Sans','Noto_Sans_CJK_SC',sans-serif] text-xs text-black">
      <div className="w-[7px] shrink-0 bg-linear-to-r from-[#f0f0f0] to-[#dcdcdc]"><div className="h-[11px] w-[3px] bg-[#00a800]" /></div>
      <main className="mr-2 mb-2 flex min-w-0 flex-1 flex-col border border-t-0 border-[#1a80d8] bg-linear-to-r from-[#f0f0f0] to-[#fbfbfb] shadow-md">
        <TitleBar />
        <nav className="flex h-[27px] shrink-0 items-center gap-[17px] pl-3">
          {MENUS.map((m) => <button key={m} type="button">{m}</button>)}
        </nav>
        <StandardBar />
        <ToolsBar />
        <div className="mt-px flex min-h-0 flex-1 pb-0.5">
          <Contents />
          <div className="ml-1 flex min-w-0 flex-1 flex-col border-t-2 border-l-2 border-[#7a7a7a] bg-white">
            <div className="flex min-h-0 flex-1 justify-end">
              <div className="flex min-w-0 flex-1 justify-end overflow-hidden"><MapDrawing /></div>
              <div className="flex w-[18px] shrink-0 flex-col items-center border-l border-[#e0e0e0] bg-[#f0f0f0]">
                <Arrow dir="up" label="Scroll map up" />
                <span className="w-3.5 flex-1 bg-[#cdcdcd]" />
                <span className="h-4" />
                <Arrow dir="down" label="Scroll map down" />
              </div>
            </div>
            <div className="flex h-4 shrink-0 items-center border-t border-[#e0e0e0] bg-[#f0f0f0] pr-[18px]">
              <Arrow dir="left" label="Scroll map left" />
              <span className="h-3.5 flex-1 bg-[#cdcdcd]" />
              <span className="w-0.5" />
              <Arrow dir="right" label="Scroll map right" />
            </div>
          </div>
          <div className="ml-1 flex w-5 shrink-0 flex-col pt-px">
            <DockTab name="catalog">Catalog</DockTab>
            <DockTab name="search">Search</DockTab>
          </div>
        </div>
        <footer className="flex h-5 shrink-0 items-center border-t border-white">
          <p className="ml-auto w-[289px] whitespace-pre">{"89.26  5.006 Decimal Degrees"}</p>
          <svg className="mr-1 mb-0.5 size-2 self-end" viewBox="0 0 8 8" aria-hidden="true"><path d="M6 0h2v2H6zM3 3h2v2H3zM6 3h2v2H6zM0 6h2v2H0zM3 6h2v2H3zM6 6h2v2H6z" fill="#b8b8b8" /></svg>
        </footer>
      </main>
      <TableWindow />
    </div>
  );
}
